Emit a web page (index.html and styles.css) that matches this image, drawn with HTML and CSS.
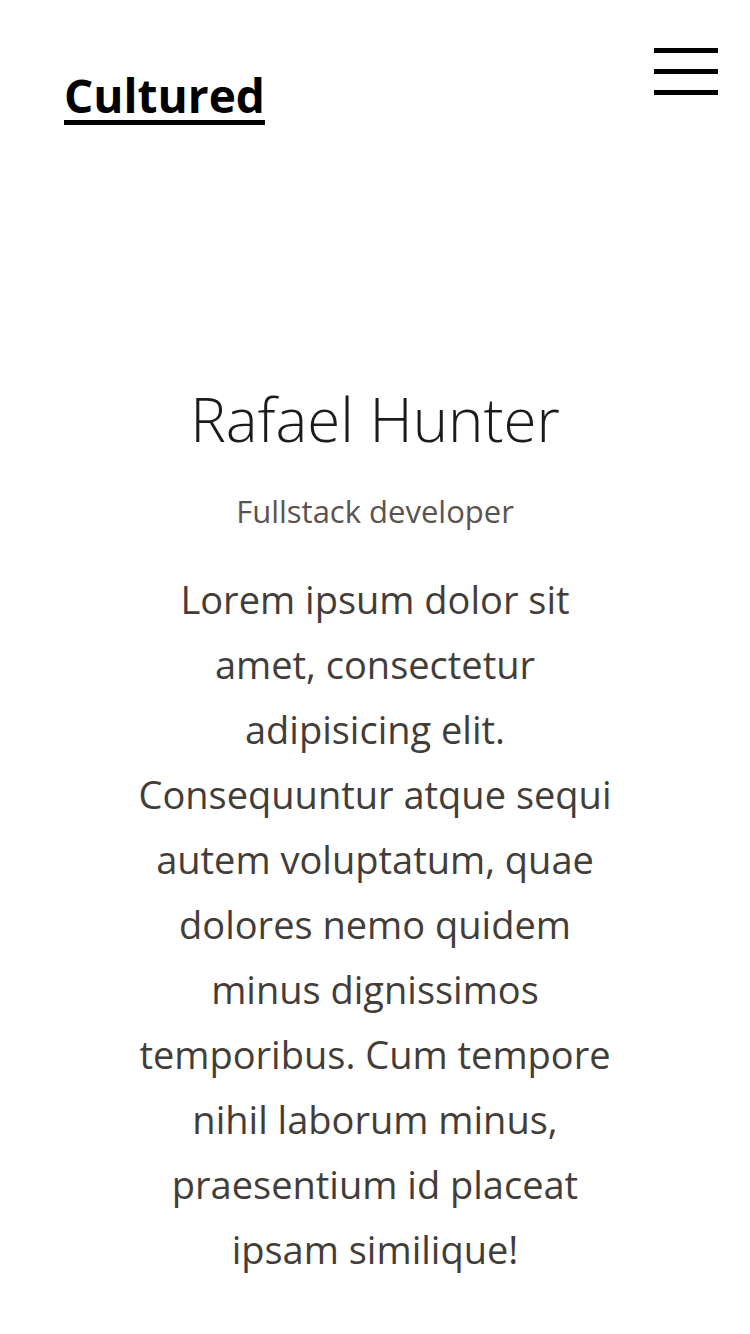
FILE: index.html
```html
<!DOCTYPE html>
<html lang="en">
<head>
<meta charset="utf-8">
<title>Cultured</title>
<link rel="stylesheet" href="styles.css">
</head>
<body>
<header class="site-header">
  <a class="logo" href="#">Cultured</a>
  <button class="menu-btn" aria-label="Menu">
    <span class="bar"></span>
    <span class="bar"></span>
    <span class="bar"></span>
  </button>
</header>
<main class="hero">
  <h1 class="name">Rafael Hunter</h1>
  <p class="role">Fullstack developer</p>
  <p class="bio">Lorem ipsum dolor sit amet, consectetur adipisicing elit. Consequuntur atque sequi autem voluptatum, quae dolores nemo quidem minus dignissimos temporibus. Cum tempore nihil laborum minus, praesentium id placeat ipsam similique!</p>
</main>
</body>
</html>
```
FILE: styles.css
```css
* { box-sizing: border-box; }
body {
  margin: 0;
  background: #fff;
  font-family: "Open Sans", "Noto Sans", sans-serif;
  color: #433d3a;
}
.site-header {
  display: flex;
  justify-content: space-between;
  align-items: flex-start;
  padding: 48px 32px 0 64px;
}
.logo {
  margin-top: 24px;
  font-size: 46px;
  font-weight: 700;
  line-height: 1;
  color: #000;
  text-decoration: none;
  border-bottom: 5px solid #000;
  padding-bottom: 2px;
}
.menu-btn {
  display: flex;
  flex-direction: column;
  gap: 16px;
  width: 64px;
  padding: 0;
  border: 0;
  background: none;
}
.bar {
  display: block;
  height: 5px;
  width: 64px;
  background: #000;
}
.hero {
  display: flex;
  flex-direction: column;
  align-items: center;
  text-align: center;
  padding-top: 258px;
}
.name {
  margin: 0;
  font-size: 60px;
  font-weight: 300;
  line-height: 1.2;
  color: #1e1a18;
}
.role {
  margin: 38px 0 0;
  font-size: 31px;
  line-height: 1.2;
  color: #5a5350;
}
.bio {
  margin: 37px 0 0;
  max-width: 482px;
  font-size: 38px;
  line-height: 65px;
}
```
